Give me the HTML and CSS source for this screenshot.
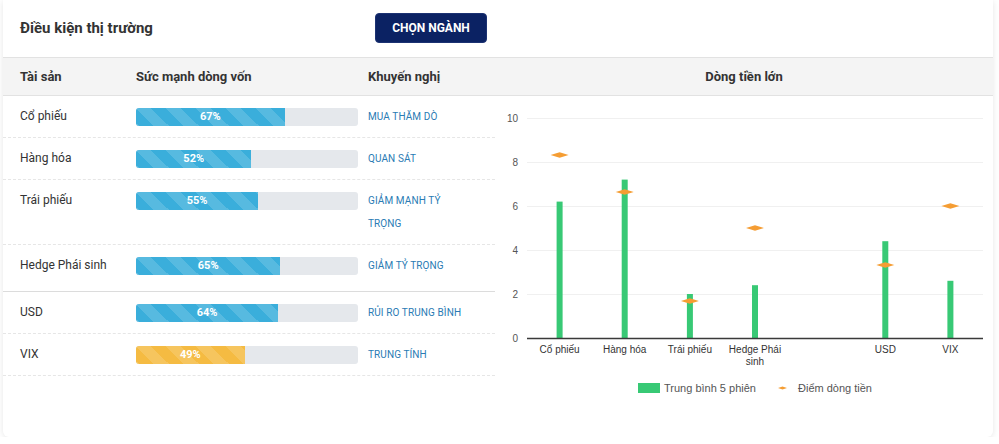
FILE: index.html
```html
<!DOCTYPE html>
<html lang="vi">
<head>
<meta charset="utf-8">
<title>Điều kiện thị trường</title>
<link rel="stylesheet" href="styles.css">
</head>
<body>
<div class="card">
  <div class="card-head">
    <h1 class="title">Điều kiện thị trường</h1>
    <button class="btn">CHỌN NGÀNH</button>
  </div>
  <div class="band">
    <div class="cols head-cols">
      <div>Tài sản</div>
      <div>Sức mạnh dòng vốn</div>
      <div>Khuyến nghị</div>
    </div>
    <div class="chart-title">Dòng tiền lớn</div>
  </div>
  <div class="body">
    <div class="table">
      <div class="cols row">
        <div class="name">Cổ phiếu</div>
        <div class="cell-bar"><div class="bar"><div class="fill" style="width:67%">67%</div></div></div>
        <div class="rec">MUA THĂM DÒ</div>
      </div>
      <div class="cols row">
        <div class="name">Hàng hóa</div>
        <div class="cell-bar"><div class="bar"><div class="fill" style="width:52%">52%</div></div></div>
        <div class="rec">QUAN SÁT</div>
      </div>
      <div class="cols row">
        <div class="name">Trái phiếu</div>
        <div class="cell-bar"><div class="bar"><div class="fill" style="width:55%">55%</div></div></div>
        <div class="rec">GIẢM MẠNH TỶ<br>TRỌNG</div>
      </div>
      <div class="cols row row-group-end">
        <div class="name">Hedge Phái sinh</div>
        <div class="cell-bar"><div class="bar"><div class="fill" style="width:65%">65%</div></div></div>
        <div class="rec">GIẢM TỶ TRỌNG</div>
      </div>
      <div class="cols row">
        <div class="name">USD</div>
        <div class="cell-bar"><div class="bar"><div class="fill" style="width:64%">64%</div></div></div>
        <div class="rec">RỦI RO TRUNG BÌNH</div>
      </div>
      <div class="cols row">
        <div class="name">VIX</div>
        <div class="cell-bar"><div class="bar"><div class="fill fill-warn" style="width:49%">49%</div></div></div>
        <div class="rec">TRUNG TÍNH</div>
      </div>
    </div>
    <div class="chart">
      <svg class="chart-svg" width="497" height="341" viewBox="0 0 497 341" xmlns="http://www.w3.org/2000/svg">
        <g class="grid">
          <line x1="32" x2="488" y1="22.5" y2="22.5"/>
          <line x1="32" x2="488" y1="66.5" y2="66.5"/>
          <line x1="32" x2="488" y1="110.5" y2="110.5"/>
          <line x1="32" x2="488" y1="154.5" y2="154.5"/>
          <line x1="32" x2="488" y1="198.5" y2="198.5"/>
        </g>
        <g class="ylab">
          <text x="23" y="26">10</text>
          <text x="23" y="70">8</text>
          <text x="23" y="114">6</text>
          <text x="23" y="158">4</text>
          <text x="23" y="202">2</text>
          <text x="23" y="246">0</text>
        </g>
        <g class="bars">
          <rect x="61.6" y="105.6" width="6" height="136.4"/>
          <rect x="126.7" y="83.6" width="6" height="158.4"/>
          <rect x="191.9" y="198" width="6" height="44"/>
          <rect x="257" y="189.2" width="6" height="52.8"/>
          <rect x="387.3" y="145.2" width="6" height="96.8"/>
          <rect x="452.4" y="184.8" width="6" height="57.2"/>
        </g>
        <line class="axis" x1="32" x2="488" y1="242.5" y2="242.5"/>
        <g class="pts">
          <polygon points="55.6,59 64.6,56.2 73.6,59 64.6,61.8"/>
          <polygon points="120.7,96 129.7,93.2 138.7,96 129.7,98.8"/>
          <polygon points="185.9,205 194.9,202.2 203.9,205 194.9,207.8"/>
          <polygon points="251,132 260,129.2 269,132 260,134.8"/>
          <polygon points="381.3,169 390.3,166.2 399.3,169 390.3,171.8"/>
          <polygon points="446.4,110 455.4,107.2 464.4,110 455.4,112.8"/>
        </g>
        <g class="xlab">
          <text x="64.6" y="256.5">Cổ phiếu</text>
          <text x="129.7" y="256.5">Hàng hóa</text>
          <text x="194.9" y="256.5">Trái phiếu</text>
          <text x="260" y="256.5">Hedge Phái</text>
          <text x="260" y="268.5">sinh</text>
          <text x="390.3" y="256.5">USD</text>
          <text x="455.4" y="256.5">VIX</text>
        </g>
        <g class="legend">
          <rect class="leg-bar" x="143" y="287" width="22" height="10"/>
          <text x="169" y="296">Trung bình 5 phiên</text>
          <polygon class="leg-pt" points="283,292 287.5,290.5 292,292 287.5,293.5"/>
          <text x="303" y="296">Điểm dòng tiền</text>
        </g>
      </svg>
    </div>
  </div>
</div>
</body>
</html>
```

FILE: styles.css
```css
* { box-sizing: border-box; }
html, body { margin: 0; padding: 0; }
body {
  background: #ffffff;
  font-family: Roboto, "Noto Sans", "Liberation Sans", sans-serif;
  color: #333;
}
.card {
  margin: 0 6px 0 3px;
  width: 990px;
  height: 437px;
  background: #fff;
  border-radius: 0 0 6px 6px;
  box-shadow: 0 1px 6px rgba(0, 0, 0, 0.10);
  overflow: hidden;
}
.card-head {
  height: 57px;
  display: flex;
  align-items: center;
  padding-left: 17px;
}
.title {
  margin: 0;
  flex: 0 0 355px;
  font-size: 15px;
  font-weight: 700;
  color: #333;
  position: relative;
  top: -1px;
}
.btn {
  width: 112px;
  height: 30px;
  margin-top: -1px;
  border: 1px solid #1c3272;
  border-radius: 4px;
  background: #0b2263;
  color: #fff;
  font-family: Roboto, "Liberation Sans", sans-serif;
  font-size: 12px;
  font-weight: 700;
  padding: 0;
}
.band {
  display: grid;
  grid-template-columns: 492px 1fr;
  height: 39px;
  background: #f4f4f4;
  border-top: 1px solid #e2e2e2;
  border-bottom: 1px solid #e2e2e2;
  font-size: 13px;
  font-weight: 700;
  color: #333;
}
.cols {
  display: grid;
  grid-template-columns: 116px 232px 1fr;
  padding-left: 17px;
}
.head-cols { align-items: center; }
.chart-title {
  display: flex;
  align-items: center;
  justify-content: center;
}
.body {
  display: grid;
  grid-template-columns: 492px 1fr;
}
.row {
  padding: 9px 0 9px 17px;
  line-height: 23px;
  border-bottom: 1px dashed #e6e6e6;
  font-size: 12px;
  align-items: start;
}
.row-group-end {
  padding-bottom: 14px;
  border-bottom: 1px solid #dcdcdc;
}
.cell-bar { padding-top: 3px; }
.bar {
  width: 222px;
  height: 18px;
  background: #e5e8ec;
  border-radius: 3px;
  overflow: hidden;
}
.fill {
  height: 100%;
  background-color: #3aaedb;
  background-image: linear-gradient(45deg,
    rgba(255,255,255,.15) 25%, transparent 25%,
    transparent 50%, rgba(255,255,255,.15) 50%,
    rgba(255,255,255,.15) 75%, transparent 75%, transparent);
  background-size: 30px 30px;
  color: #fff;
  font-size: 11px;
  font-weight: 700;
  line-height: 18px;
  text-align: center;
}
.fill-warn { background-color: #f5bb42; }
.rec {
  font-size: 10px;
  color: #2a7bb4;
  letter-spacing: 0.1px;
}
.chart { min-width: 0; }
.chart-svg { display: block; }
.grid line { stroke: #f0f0f0; stroke-width: 1; }
.axis { stroke: #3a3a3a; stroke-width: 1.5; }
.ylab text {
  font-family: "Liberation Sans", Arial, sans-serif;
  font-size: 10px;
  fill: #555;
  text-anchor: end;
}
.bars rect { fill: #38c975; }
.pts polygon { fill: #f59d33; }
.xlab text {
  font-family: "Liberation Sans", Arial, sans-serif;
  font-size: 10px;
  fill: #333;
  text-anchor: middle;
}
.legend text {
  font-family: "Liberation Sans", Arial, sans-serif;
  font-size: 11px;
  fill: #555;
}
.leg-bar { fill: #38c975; }
.leg-pt { fill: #f59d33; }
```
